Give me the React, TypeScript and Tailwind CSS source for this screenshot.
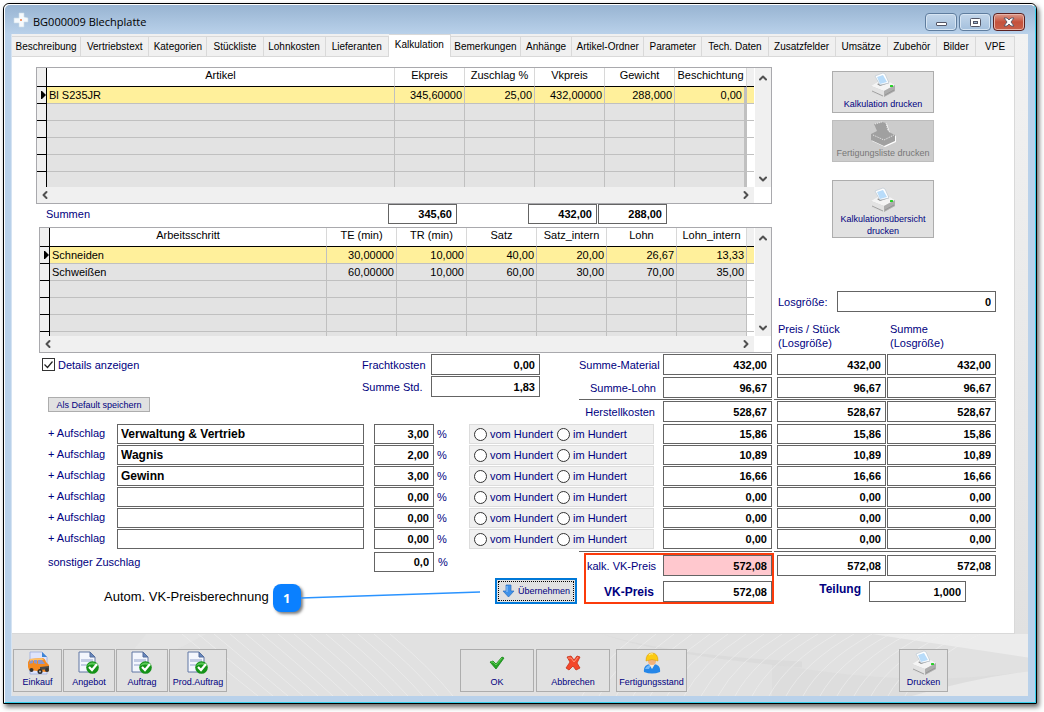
import React, { useState } from "react"
import clsx from "clsx"
import { ChevronDown, ChevronLeft, ChevronRight, ChevronUp } from "lucide-react"

const tabs = [
  { label: "Beschreibung", width: "basis-[69px]" },
  { label: "Vertriebstext", width: "basis-[68px]" },
  { label: "Kategorien", width: "basis-[58px]" },
  { label: "Stückliste", width: "basis-[56px]" },
  { label: "Lohnkosten", width: "basis-[62px]" },
  { label: "Lieferanten", width: "basis-[63px]" },
  { label: "Kalkulation", width: "basis-[62px]" },
  { label: "Bemerkungen", width: "basis-[70px]" },
  { label: "Anhänge", width: "basis-[51px]" },
  { label: "Artikel-Ordner", width: "basis-[72px]" },
  { label: "Parameter", width: "basis-[58px]" },
  { label: "Tech. Daten", width: "basis-[66px]" },
  { label: "Zusatzfelder", width: "basis-[67px]" },
  { label: "Umsätze", width: "basis-[52px]" },
  { label: "Zubehör", width: "basis-[49px]" },
  { label: "Bilder", width: "basis-[39px]" },
  { label: "VPE", width: "basis-[39px]" },
]

const articleHead = ["Artikel", "Ekpreis", "Zuschlag %", "Vkpreis", "Gewicht", "Beschichtung"]
const articleRows = [["Bl S235JR", "345,60000", "25,00", "432,00000", "288,000", "0,00"]]

const stepHead = ["Arbeitsschritt", "TE (min)", "TR (min)", "Satz", "Satz_intern", "Lohn", "Lohn_intern"]
const stepRows = [
  ["Schneiden", "30,00000", "10,000", "40,00", "20,00", "26,67", "13,33"],
  ["Schweißen", "60,00000", "10,000", "60,00", "30,00", "70,00", "35,00"],
]

const surcharges = [
  { name: "Verwaltung & Vertrieb", percent: "3,00", value: "15,86" },
  { name: "Wagnis", percent: "2,00", value: "10,89" },
  { name: "Gewinn", percent: "3,00", value: "16,66" },
  { name: "", percent: "0,00", value: "0,00" },
  { name: "", percent: "0,00", value: "0,00" },
  { name: "", percent: "0,00", value: "0,00" },
]

const Printer = ({ disabled = false }: { disabled?: boolean }) => {
  if (disabled) {
    return (
      <svg viewBox="0 0 26 26" className="h-[26px] w-[26px]">
        <path d="M5 4l8-2 4 1 3 9 6 3v6l-11 5L2 20v-6l6-3z" fill="#fff" />
        <path d="M4 3l8-2 4 1 3 9 6 3v6l-11 5L1 19v-6l6-3z" fill="#a0a0a0" />
        <path d="M5 3l7-2M16 2l2 8M3 14l11 5 10-5" fill="none" stroke="#fff" strokeDasharray="1 1" strokeWidth=".8" />
      </svg>
    )
  }
  return (
    <svg viewBox="0 0 26 26" className="h-[26px] w-[26px]">
      <path d="M1 14l8-5 11 1 5 3v6l-11 6L1 20z" fill="#cfcfcf" />
      <path d="M1 14l8-5 11 1 5 3-11 6z" fill="#f4f4f4" />
      <path d="M1 14l13 5v6L1 20z" fill="#e2e2e2" />
      <path d="M14 19l11-6v6l-11 6z" fill="#adadad" />
      <path d="M2 19l11 5M15 23l9-5" stroke="#8f8f8f" strokeWidth=".8" />
      <path d="M7 12l3 2 9-3-1-2z" fill="#8c8c8c" />
      <path d="M5 4l8-3 2 1 4 9-9 2z" fill="#fff" stroke="#b5c3cf" strokeWidth=".6" />
      <path d="M7 5l6-2 4 7-7 2z" fill="#b8dcfa" />
      <rect x="20" y="13" width="3" height="2" rx=".5" fill="#27cf27" />
    </svg>
  )
}

const DocumentCheck = () => (
  <svg viewBox="0 0 22 24" className="h-6 w-[22px]">
    <path d="M1 1h11l5 5v15H1z" fill="#f3f6fd" stroke="#6077a3" />
    <path d="M12 1v5h5z" fill="#6687bd" stroke="#546d9c" />
    <path d="M3 8h12v3H3zM3 13h8v2H3z" fill="#c3cce4" />
    <circle cx="14.5" cy="16.5" r="6.3" fill="#159218" />
    <path d="M9 15a6 6 0 0 1 11 0q-6-3-11 0" fill="#59c958" />
    <path d="M11 16l3 3 5-6" fill="none" stroke="#fff" strokeWidth="2.2" />
  </svg>
)

const Van = () => (
  <svg viewBox="0 0 24 24" className="h-6 w-6">
    <path d="M4 1h12l5 5v17H4z" fill="#dfe4fb" stroke="#9aabdc" strokeWidth=".8" />
    <path d="M16 1v5h5z" fill="#3f86d6" />
    <path d="M2 11l2-3 12-1q3 0 4 4l3 3v6l-3 1-17-2-1-3z" fill="#f58a1f" />
    <path d="M4 8l12-1 2 2-14 1z" fill="#ffc068" />
    <path d="M4 10l3-1v3l-4 1zM8 9h3v4l-3-1zM12 9h4l3 4h-7z" fill="#8d96c8" />
    <path d="M14 16l9-1v3l-9 1z" fill="#4b4b4b" />
    <circle cx="5.5" cy="19" r="2" fill="#333" />
    <circle cx="14" cy="20.5" r="2.5" fill="#2b2b2b" />
    <circle cx="14" cy="20.5" r="1" fill="#bbb" />
    <circle cx="21" cy="19" r="2" fill="#333" />
  </svg>
)

const Tick = () => (
  <svg viewBox="0 0 16 14" className="h-[14px] w-4">
    <path d="M1 6l3-1 3 3 6-7 2 1-8 11z" fill="#25a325" stroke="#158515" strokeWidth=".8" />
    <path d="M2 6l2 0 3 3 6-7" fill="none" stroke="#71d865" strokeWidth=".8" />
  </svg>
)

const Cross = () => (
  <svg viewBox="0 0 16 16" className="h-4 w-4">
    <path
      d="M2 2l4-1 3 4 3-4 3 1-3 6 3 5-4 2-3-4-4 4-3-2 4-6z"
      fill="#f4472b"
      stroke="#c73016"
      strokeWidth=".8"
    />
    <path d="M3 3l3 0 3 4 4-5" fill="none" stroke="#ff9a80" strokeWidth=".9" />
  </svg>
)

const Worker = () => (
  <svg viewBox="0 0 18 22" className="h-[22px] w-[18px]">
    <path d="M1 20q-1-7 6-8h4q7 1 6 8-8 3-16 0z" fill="#2687e8" />
    <path d="M2 17q2-4 6-4l-2 4z" fill="#77bbfa" />
    <path d="M6 12l3 5 3-5z" fill="#f5e9d8" />
    <circle cx="9" cy="9" r="4" fill="#f2b27c" />
    <path d="M3 9q0-8 6-8t6 8q-6-3-12 0z" fill="#fccb13" stroke="#dc9d08" strokeWidth=".6" />
    <path d="M6 3q2-2 4-1" stroke="#fff3a1" fill="none" />
  </svg>
)

const ArrowDown = () => (
  <svg viewBox="0 0 13 14" className="h-[14px] w-[13px] shrink-0">
    <path d="M4 1h5v6h3l-5.500 6L1 7h3z" fill="#3f92ea" stroke="#2b6fbd" strokeWidth=".7" />
    <path d="M5 2v6" stroke="#9bcbfa" />
  </svg>
)

const Logo = () => (
  <svg viewBox="0 0 16 16" className="h-4 w-4">
    <path d="M6 1h5v4l4 1v4h-4v5H6v-4l-5 0V6h5z" fill="#f6fafd" stroke="#cfdde9" strokeWidth=".6" />
    <rect x="7" y="7" width="2" height="2" fill="#ef9a72" />
  </svg>
)

const Field = ({
  className = "w-[109px]",
  height = "h-[21px]",
  ...rest
}: React.InputHTMLAttributes<HTMLInputElement> & { height?: string }) => (
  <input
    type="text"
    className={clsx(
      "min-w-0 border border-[#646464] px-1 text-right text-[11px] font-bold text-black outline-none",
      !className.includes("bg-") && "bg-white",
      height,
      className
    )}
    {...rest}
  />
)

const Values = ({ label, value, height }: { label: string; value: string; height?: string }) => (
  <div className="flex shrink-0">
    <Field aria-label={label} defaultValue={value} height={height} />
    <Field
      aria-label={`${label} Preis / Stück`}
      defaultValue={value}
      height={height}
      className="ml-[5px] w-[109px]"
    />
    <Field aria-label={`${label} Summe`} defaultValue={value} height={height} className="ml-px w-[109px]" />
  </div>
)

const DividerLine = () => (
  <div className="flex gap-[2px] self-end">
    <div className="h-px w-[193px] bg-[#646464]" />
    <div className="h-px w-[222px] bg-[#646464]" />
  </div>
)

type GridProps = {
  caption: string
  head: string[]
  rows: string[][]
  height: string
  thickEnd?: boolean
}

const DataGrid = ({ caption, head, rows, height, thickEnd }: GridProps) => {
  const filled = [...rows]
  while (filled.length < 6) filled.push(head.map(() => ""))

  return (
    <div className="border border-[#a9a9ad] bg-white">
      <div className={clsx("flex", height)}>
        <div className="min-w-0 flex-1 overflow-hidden">
          <table
            aria-label={caption}
            className="w-full table-fixed border-separate border-spacing-0 text-[11px] leading-[14px]"
          >
            <colgroup>
              <col className="w-[10px]" />
              <col />
              {head.slice(1).map((name, i) => (
                <col
                  key={name}
                  className={thickEnd && i === head.length - 2 ? "w-[72px]" : "w-[70px]"}
                />
              ))}
              <col className="w-[7px]" />
            </colgroup>
            <thead>
              <tr className="h-[19px]">
                <td className="border-r border-b border-black bg-[#f0f0f0] p-0" />
                {head.map((name) => (
                  <th
                    key={name}
                    className="border-r border-b border-r-[#d8d8d8] border-b-black p-0 pb-1 font-normal whitespace-nowrap"
                  >
                    {name}
                  </th>
                ))}
                <td className="border-b border-black bg-[#f0f0f0] p-0" />
              </tr>
            </thead>
            <tbody>
              {filled.map((row, r) => (
                <tr key={r} className="h-[17px]">
                  <td className="border-r border-b border-black bg-[#f0f0f0] p-0">
                    {r === 0 && (
                      <svg viewBox="0 0 5 8" className="ml-auto h-2 w-[5px]">
                        <path d="M0 0h1l4 4-4 4H0z" />
                      </svg>
                    )}
                  </td>
                  {row.map((cell, c) => (
                    <td
                      key={c}
                      className={clsx(
                        "border-b border-[#c0c0c0] p-0",
                        thickEnd && c === row.length - 1 ? "border-r-[3px]" : "border-r",
                        c === 0 ? "pl-[2px]" : "pr-[2px] text-right",
                        r === 0 ? "bg-[#fff09b]" : "bg-[#e3e3e3]"
                      )}
                    >
                      {cell}
                    </td>
                  ))}
                  <td className={clsx("border-b border-[#c0c0c0] p-0", r === 0 && "bg-[#fff09b]")} />
                </tr>
              ))}
            </tbody>
          </table>
        </div>
        <div className="ml-px flex w-4 flex-col justify-between bg-[#f0f0f0] text-[#505050]">
          <button type="button" aria-label="Nach oben" className="flex h-5 items-center justify-center">
            <ChevronUp size={12} strokeWidth={4} />
          </button>
          <button type="button" aria-label="Nach unten" className="flex h-4 items-center justify-center">
            <ChevronDown size={12} strokeWidth={4} />
          </button>
        </div>
      </div>
      <div className="mr-[17px] flex h-4 items-center justify-between bg-[#f0f0f0] text-[#505050]">
        <button type="button" aria-label="Nach links" className="px-[2px]">
          <ChevronLeft size={12} strokeWidth={4} />
        </button>
        <button type="button" aria-label="Nach rechts" className="px-[2px]">
          <ChevronRight size={12} strokeWidth={4} />
        </button>
      </div>
    </div>
  )
}

const PrintButton = ({
  label,
  disabled = false,
  className = "h-[42px]",
}: {
  label: string
  disabled?: boolean
  className?: string
}) => (
  <button
    type="button"
    disabled={disabled}
    className={clsx(
      "flex w-[102px] flex-col items-center border text-[9px] leading-3",
      disabled ? "border-[#bdbdbd] bg-[#cccccc] text-[#777777]" : "border-[#adadad] bg-[#e1e1e1] text-[#000080]",
      className
    )}
  >
    <Printer disabled={disabled} />
    <span className="whitespace-pre-line">{label}</span>
  </button>
)

const FooterButton = ({
  label,
  width,
  children,
}: {
  label: string
  width: string
  children: React.ReactNode
}) => (
  <button
    type="button"
    className={clsx(
      "flex h-[43px] flex-col items-center justify-end border border-[#adadad] bg-[#e1e1e1] pb-[3px] text-[9px] leading-3 whitespace-nowrap text-[#000080]",
      width
    )}
  >
    <span className="flex flex-1 items-center">{children}</span>
    {label}
  </button>
)

const SurchargeRow = ({ index }: { index: number }) => {
  const row = surcharges[index]
  const id = `aufschlag-${index}`

  return (
    <div className="flex">
      <label htmlFor={id} className="w-[69px] leading-[18px]">
        + Aufschlag
      </label>
      <input
        id={id}
        type="text"
        defaultValue={row.name}
        className="h-5 min-w-0 flex-1 border border-[#646464] bg-white px-[3px] text-[12px] font-bold text-black outline-none"
      />
      <Field
        id={`${id}-prozent`}
        defaultValue={row.percent}
        height="h-5"
        className="ml-[10px] w-[60px]"
      />
      <label htmlFor={`${id}-prozent`} className="w-[35px] pl-[3px] leading-5">
        %
      </label>
      <fieldset
        aria-label="Berechnungsart"
        className="mr-[9px] flex h-5 w-[185px] items-center border border-[#dcdcdc] bg-[#f0f0f0] pl-1 leading-[18px]"
      >
        <label className="flex items-center gap-[3px]">
          <input
            type="radio"
            name={`${id}-art`}
            className="h-[13px] w-[13px] appearance-none rounded-full border border-[#333] bg-white checked:border-4"
          />
          vom Hundert
        </label>
        <label className="ml-1 flex items-center gap-[3px]">
          <input
            type="radio"
            name={`${id}-art`}
            className="h-[13px] w-[13px] appearance-none rounded-full border border-[#333] bg-white checked:border-4"
          />
          im Hundert
        </label>
      </fieldset>
      <Values label={`Aufschlag ${index + 1}`} value={row.value} height="h-5" />
    </div>
  )
}

const TitleBar = () => (
  <header className="flex h-[29px] items-center bg-gradient-to-b from-[#98b4d2] to-[#b9d1ea] pr-[10px] pl-2">
    <Logo />
    <h1 className="ml-1 pt-[7px] pb-[2px] font-['Open_Sans',sans-serif] text-[11px] text-black">
      BG000009 Blechplatte
    </h1>
    <div className="ml-auto flex gap-[2px] pt-[5px]">
      <button
        type="button"
        aria-label="Minimieren"
        className="flex h-[18px] w-8 items-center justify-center rounded-sm border border-[#5f7d9e] bg-gradient-to-b from-[#c3d6ea] to-[#a4c0dd] shadow-[inset_0_0_0_1px_#d7e5f3]"
      >
        <span className="mt-1 h-1 w-[11px] rounded-[1px] border border-[#535666] bg-white" />
      </button>
      <button
        type="button"
        aria-label="Maximieren"
        className="flex h-[18px] w-8 items-center justify-center rounded-sm border border-[#5f7d9e] bg-gradient-to-b from-[#c3d6ea] to-[#a4c0dd] shadow-[inset_0_0_0_1px_#d7e5f3]"
      >
        <svg viewBox="0 0 11 9" className="h-[9px] w-[11px]">
          <rect x=".5" y=".5" width="10" height="8" rx="1" fill="#fff" stroke="#535666" />
          <rect x="3.500" y="3.500" width="4" height="2" fill="#9cb6d2" stroke="#535666" />
        </svg>
      </button>
      <button
        type="button"
        aria-label="Schließen"
        className="flex h-[18px] w-8 items-center justify-center rounded-sm border border-[#5a2020] bg-gradient-to-b from-[#dc9a8c] via-[#c4513c] to-[#c9604a] shadow-[inset_0_0_0_1px_#e8b5aa]"
      >
        <svg viewBox="0 0 12 10" className="h-[10px] w-3">
          <path
            d="M1 1h3l2 2 2-2h3L8 5l3 4H8L6 7 4 9H1l3-4z"
            fill="#fff"
            stroke="#535666"
            strokeWidth=".9"
          />
        </svg>
      </button>
    </div>
  </header>
)

const Backdrop = () => (
  <svg
    viewBox="0 0 1016 63"
    preserveAspectRatio="none"
    className="absolute inset-0 h-full w-full"
    fill="none"
    aria-hidden="true"
  >
    <path d="M860 0h156v24z" fill="#ececec" />
    <path d="M760 30q140 26 256 8v25H760z" fill="#dadada" opacity=".6" />
    <path d="M900 63q60-18 116-25v25z" fill="#e9e9e9" />
    <path d="M110 30q20-24 24-30h60l-18 10q-20 10-40 20z" fill="#e6e6e6" opacity=".6" />
    <path d="M590 0q70 22 200 28v6Q650 22 590 0z" fill="#d8d8d8" opacity=".7" />
    <g stroke="#efefef" opacity=".7">
      {Array.from({ length: 14 }, (_, i) => (
        <path key={i} d={`M${170 + i * 16} 0q40 34 ${76 - i} 63`} />
      ))}
      {Array.from({ length: 20 }, (_, i) => (
        <path key={i} d={`M${570 + i * 17} 63q18-34 ${56 + i} -63`} />
      ))}
    </g>
  </svg>
)

const App = () => {
  const [activeTab, setActiveTab] = useState("Kalkulation")

  return (
    <div className="flex min-h-screen bg-white pt-[3px] pr-[7px] pb-2 pl-[3px] font-['Liberation_Sans',Arial,sans-serif] text-[11px] leading-[14px] text-[#000080]">
      <div className="flex flex-1 flex-col rounded-t-md border border-black shadow-[2px_3px_5px_rgba(0,0,0,0.6)]">
        <div className="flex flex-1 flex-col overflow-hidden rounded-t-md border border-t-white border-r-[#35d0ee] border-b-[#35d0ee] border-l-white bg-[#b9d1ea]">
          <TitleBar />

          <main className="mr-[7px] mb-[6px] ml-[6px] flex flex-1 flex-col border-l border-[#d5e3f2] bg-[#e1e1e1]">
            <div className="flex flex-1 flex-col bg-gradient-to-b from-[#f2f2f2] to-[#e1e1e1] pr-[13px]">
              <nav className="flex h-[23px] items-end bg-[#f0f0f0] text-[10px] text-black">
                {tabs.map((tab) => (
                  <button
                    key={tab.label}
                    type="button"
                    onClick={() => setActiveTab(tab.label)}
                    className={clsx(
                      "min-w-0 shrink grow whitespace-nowrap border-t border-r border-[#d9d9d9]",
                      tab.width,
                      tab.label === activeTab
                        ? "h-[23px] bg-white pb-[2px]"
                        : "h-[21px] border-b bg-[#f0f0f0]"
                    )}
                  >
                    {tab.label}
                  </button>
                ))}
              </nav>

              <form
                className="flex flex-1 flex-col border-r border-b border-[#d9d9d9] bg-white pr-[18px] pb-[29px]"
                onSubmit={(e) => e.preventDefault()}
              >
                {/* grids and print actions */}
                <div className="flex pt-[10px] text-black">
                  <div className="flex min-w-0 flex-1 flex-col pl-6">
                    <DataGrid
                      caption="Artikel"
                      head={articleHead}
                      rows={articleRows}
                      height="h-[119px]"
                      thickEnd
                    />
                    <div className="flex h-[23px] pr-[105px] pl-[10px] text-[#000080]">
                      <span className="flex-1 pt-[3px]">Summen</span>
                      <Field
                        aria-label="Summe Ekpreis"
                        defaultValue="345,60"
                        height="h-5"
                        className="w-[69px]"
                      />
                      <Field
                        aria-label="Summe Vkpreis"
                        defaultValue="432,00"
                        height="h-5"
                        className="ml-[71px] w-[69px]"
                      />
                      <Field
                        aria-label="Summe Gewicht"
                        defaultValue="288,00"
                        height="h-5"
                        className="ml-px w-[69px]"
                      />
                    </div>
                    <div className="pl-[3px]">
                      <DataGrid caption="Arbeitsschritte" head={stepHead} rows={stepRows} height="h-[108px]" />
                    </div>
                  </div>

                  <div className="flex w-[224px] flex-col pt-1 pl-[6px] text-[#000080]">
                    <div className="flex flex-col gap-[7px] pl-[54px]">
                      <PrintButton label="Kalkulation drucken" />
                      <PrintButton label="Fertigungsliste drucken" disabled />
                      <PrintButton
                        label={"Kalkulationsübersicht\ndrucken"}
                        className="mt-[11px] h-[58px] pt-[6px]"
                      />
                    </div>
                    <div className="mt-auto flex items-center">
                      <label htmlFor="losgroesse" className="w-[59px]">
                        Losgröße:
                      </label>
                      <Field id="losgroesse" defaultValue="0" className="flex-1" />
                    </div>
                    <div className="mt-[10px] mb-[3px] flex">
                      <p className="w-[112px]">
                        Preis / Stück
                        <br />
                        (Losgröße)
                      </p>
                      <p>
                        Summe
                        <br />
                        (Losgröße)
                      </p>
                    </div>
                  </div>
                </div>

                <div className="flex flex-col pt-px pl-9">
                  {/* totals */}
                  <div className="flex">
                    <div className="flex flex-1 flex-col">
                      <div className="flex">
                        <label className="-ml-[6px] flex h-[21px] items-center gap-[3px]">
                          <span className="relative h-[13px] w-[13px]">
                            <input
                              type="checkbox"
                              defaultChecked
                              className="peer block h-[13px] w-[13px] appearance-none border border-[#333] bg-white"
                            />
                            <svg
                              viewBox="0 0 13 13"
                              className="pointer-events-none absolute inset-0 hidden peer-checked:block"
                            >
                              <path d="M2.500 6.500l3 3 5-6" fill="none" stroke="#222" strokeWidth="1.2" />
                            </svg>
                          </span>
                          Details anzeigen
                        </label>
                        <div className="ml-auto grid grid-cols-[69px_109px] items-center gap-y-[1px]">
                          <label htmlFor="fracht">Frachtkosten</label>
                          <Field id="fracht" defaultValue="0,00" />
                          <label htmlFor="stunden">Summe Std.</label>
                          <Field id="stunden" defaultValue="1,83" />
                        </div>
                      </div>
                      <button
                        type="button"
                        className="h-[15px] w-[102px] self-start border border-[#adadad] bg-[#e1e1e1] text-[9px] leading-3 whitespace-nowrap"
                      >
                        Als Default speichern
                      </button>
                    </div>
                    <div className="ml-[39px] flex flex-col">
                      <div className="flex items-center justify-between">
                        <span>Summe-Material</span>
                        <Values label="Summe-Material" value="432,00" />
                      </div>
                      <div className="mt-[2px] mb-px flex items-center">
                        <span className="flex-1 pr-[7px] text-right">Summe-Lohn</span>
                        <Values label="Summe-Lohn" value="96,67" />
                      </div>
                      <DividerLine />
                      <div className="mt-px flex items-center">
                        <span className="w-[84px] pr-2 text-right">Herstellkosten</span>
                        <Values label="Herstellkosten" value="528,67" />
                      </div>
                    </div>
                  </div>

                  {/* surcharges */}
                  <div className="mt-[2px] mb-[2px] flex flex-col gap-px">
                    {surcharges.map((_, i) => (
                      <SurchargeRow key={i} index={i} />
                    ))}
                  </div>
                  <DividerLine />

                  {/* sales price */}
                  <div className="flex">
                    <div className="mr-[7px] flex flex-1 flex-col">
                      <div className="flex">
                        <label htmlFor="sonstiger" className="flex-1 leading-5">
                          sonstiger Zuschlag
                        </label>
                        <Field id="sonstiger" defaultValue="0,0" height="h-5" className="w-[60px]" />
                        <span className="w-[143px] pl-1 leading-5">%</span>
                      </div>
                      <div className="mt-[6px] flex h-[26px] items-start pl-14">
                        <span className="pt-3 text-[13px] whitespace-nowrap text-black">
                          Autom. VK-Preisberechnung
                        </span>
                        <span className="mt-[6px] ml-1 flex h-7 w-7 shrink-0 items-center justify-center rounded-lg bg-[#0a80ff] font-['Open_Sans',sans-serif] text-[13px] font-bold text-white shadow-[2px_2px_3px_rgba(0,0,0,0.5)]">
                          1
                        </span>
                        <svg
                          viewBox="0 0 178 8"
                          preserveAspectRatio="none"
                          className="mt-[13px] mr-[15px] h-2 min-w-0 flex-1"
                        >
                          <path d="M0 7L178 1" stroke="#2a93ff" strokeWidth="1.3" />
                        </svg>
                        <button
                          type="button"
                          className="h-[26px] w-[82px] shrink-0 border-2 border-[#0078d7] bg-[#e1e1e1] p-px text-[9px]"
                        >
                          <span className="flex h-full items-center justify-center gap-[3px] border border-dotted border-black">
                            <ArrowDown />
                            Übernehmen
                          </span>
                        </button>
                      </div>
                    </div>

                    <div className="mt-px w-[190px] border-2 border-[#fb3b0b]">
                      <div className="flex items-center justify-between">
                        <label htmlFor="kalk-vk" className="pl-[1px]">
                          kalk. VK-Preis
                        </label>
                        <Field id="kalk-vk" defaultValue="572,08" className="w-[109px] bg-[#ffc8ce]" />
                      </div>
                      <div className="mt-[5px] flex items-center justify-between">
                        <label htmlFor="vk" className="flex-1 pr-[9px] text-right text-[12px] font-bold">
                          VK-Preis
                        </label>
                        <Field id="vk" defaultValue="572,08" />
                      </div>
                    </div>

                    <div className="ml-[3px] flex w-[219px] flex-col pt-[3px]">
                      <div className="flex gap-px">
                        <Field aria-label="kalk. VK-Preis Preis / Stück" defaultValue="572,08" />
                        <Field aria-label="kalk. VK-Preis Summe" defaultValue="572,08" />
                      </div>
                      <div className="mt-[5px] flex justify-end pr-[30px]">
                        <label htmlFor="teilung" className="pt-[1px] pr-2 text-[12px] font-bold">
                          Teilung
                        </label>
                        <Field id="teilung" defaultValue="1,000" className="w-[97px]" />
                      </div>
                    </div>
                  </div>
                </div>
              </form>
            </div>

            <footer className="relative">
              <Backdrop />
              <div className="relative flex h-[62px] items-end pb-1">
                <div className="flex gap-px pl-px">
                  <FooterButton label="Einkauf" width="w-[49px]">
                    <Van />
                  </FooterButton>
                  <FooterButton label="Angebot" width="w-[52px]">
                    <DocumentCheck />
                  </FooterButton>
                  <FooterButton label="Auftrag" width="w-[52px]">
                    <DocumentCheck />
                  </FooterButton>
                  <FooterButton label="Prod.Auftrag" width="w-[58px]">
                    <DocumentCheck />
                  </FooterButton>
                </div>
                <div className="grow-[11]" />
                <div className="flex gap-[2px]">
                  <FooterButton label="OK" width="w-[74px]">
                    <Tick />
                  </FooterButton>
                  <FooterButton label="Abbrechen" width="w-[74px]">
                    <Cross />
                  </FooterButton>
                  <FooterButton label="Fertigungsstand" width="ml-1 w-[71px]">
                    <Worker />
                  </FooterButton>
                </div>
                <div className="grow-[10]" />
                <div className="pr-20">
                  <FooterButton label="Drucken" width="w-[49px]">
                    <Printer />
                  </FooterButton>
                </div>
              </div>
            </footer>
          </main>
        </div>
      </div>
    </div>
  )
}

export default App
